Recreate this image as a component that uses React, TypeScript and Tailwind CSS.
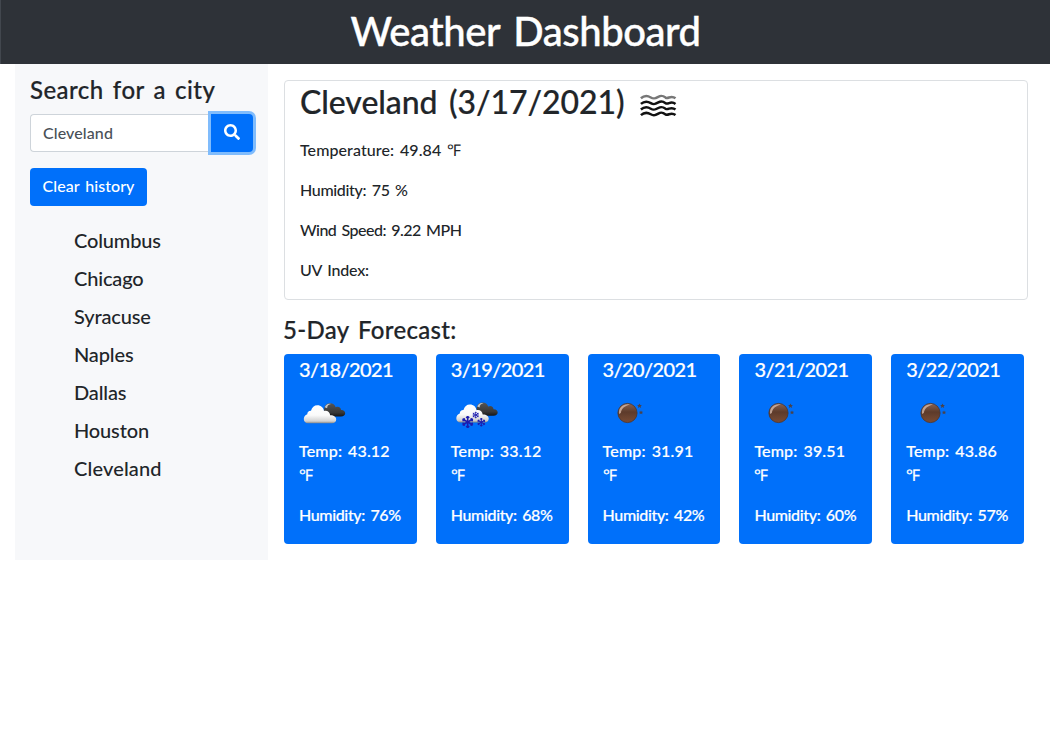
import type { ReactNode } from "react";

const cities = ["Columbus", "Chicago", "Syracuse", "Naples", "Dallas", "Houston", "Cleveland"];

type Sky = "clouds" | "snow" | "moon";

const forecast: { date: string; temp: string; humidity: number; sky: Sky }[] = [
  { date: "3/18/2021", temp: "43.12", humidity: 76, sky: "clouds" },
  { date: "3/19/2021", temp: "33.12", humidity: 68, sky: "snow" },
  { date: "3/20/2021", temp: "31.91", humidity: 42, sky: "moon" },
  { date: "3/21/2021", temp: "39.51", humidity: 60, sky: "moon" },
  { date: "3/22/2021", temp: "43.86", humidity: 57, sky: "moon" },
];

function Flake({ x, y, r }: { x: number; y: number; r: number }) {
  return (
    <g transform={`translate(${x} ${y}) scale(${r / 6})`} stroke="#1c1cae" strokeWidth="1.5" fill="none">
      {[0, 60, 120, 180, 240, 300].map((a) => (
        <path key={a} transform={`rotate(${a})`} d="M0 0V-6M-1.5 -5.2L0 -3.6L1.5 -5.2" />
      ))}
    </g>
  );
}

function SkyIcon({ sky }: { sky: Sky }) {
  return (
    <svg width="50" height="50" viewBox="0 0 50 50" className="block">
      <defs>
        <linearGradient id="white" x1="0" y1="0" x2="0" y2="1">
          <stop offset="0" stopColor="#fff" />
          <stop offset=".55" stopColor="#fafafa" />
          <stop offset=".88" stopColor="#d2d2d2" />
          <stop offset="1" stopColor="#858585" />
        </linearGradient>
        <linearGradient id="dark" x1="0" y1="0" x2="0" y2="1">
          <stop offset="0" stopColor="#555" />
          <stop offset=".7" stopColor="#383838" />
          <stop offset="1" stopColor="#171717" />
        </linearGradient>
        <linearGradient id="brown" x1="0" y1="0" x2="0" y2="1">
          <stop offset="0" stopColor="#8a6350" />
          <stop offset=".45" stopColor="#5d3b2b" />
          <stop offset="1" stopColor="#7a4c35" />
        </linearGradient>
      </defs>
      {sky === "moon" ? (
        <g transform="translate(-3.5 0)">
          <circle cx="28" cy="25" r="9.6" fill="url(#brown)" stroke="#523424" strokeWidth=".8" />
          <path d="M19.5 26C18.7 19.5 24 15.3 30.5 16.5C25.5 18 22.5 19.5 21.3 25Z" fill="#d4b8a8" opacity=".8" />
          <path d="M40 15.5l.8 1.5 1.6.1-1.2 1.1.4 1.7-1.6-.8-1.6.8.4-1.7-1.2-1.1 1.6-.1zM41.5 22.5l.7 1.2 1.5.1-1.1 1 .3 1.5-1.4-.7-1.4.7.3-1.5-1.1-1 1.5-.1z" fill="#49434b" />
        </g>
      ) : (
        <g transform={sky === "snow" ? "translate(.5 -1.5)" : "translate(0 -.7)"}>
          <path d="M25 23.5C25 19 27 16 31 16C34 16 35.8 17.5 36.7 20C39.5 18.5 42 20.5 42 22.7C44.5 22.5 46.2 24 46.2 26C46.2 28 44.5 29.2 42 29.2H29Z" fill="url(#dark)" />
          <path d="M25.7 20C27 16.8 29.5 15.8 32 16.8C29.5 17.2 28.3 18.2 28.1 21Z" fill="#c4c4c4" />
          <path d="M9 36C6.5 36 4.8 34.2 4.8 31.8C4.8 29.4 6.2 27.8 8.3 27C8.2 24.6 10 23.3 12 23.5C12.8 20 15.3 18 18.4 18C22 18 24.6 20.4 25 23.8C28 22.8 31 25 31.2 28C34.5 27.8 37.2 29.5 37.2 32.3C37.2 34.6 35.5 36 33 36Z" fill="url(#white)" />
        </g>
      )}
      {sky === "snow" && (
        <g>
          <Flake x={16.7} y={34} r={6} />
          <Flake x={24.7} y={27} r={3.3} />
          <Flake x={30.3} y={34.3} r={4.2} />
        </g>
      )}
    </svg>
  );
}

function MistIcon() {
  return (
    <svg width="50" height="36" viewBox="0 0 50 36" fill="none" strokeWidth="2.5">
      {["#777", "#111", "#111", "#111"].map((c, i) => (
        <path
          key={i}
          transform={`translate(-.7 ${i * 5.6 + 1.3})`}
          stroke={c}
          d="M8.6 10C12 7 15 7.1 18.5 9.2C22 11.2 23.5 10 26 8.5C29.5 6.7 31 7.6 33.3 9.3C36 11 38.5 6.3 43.2 10"
        />
      ))}
    </svg>
  );
}

function Reading({ children, className }: { children: ReactNode; className: string }) {
  return <p className={`mb-4 leading-6 ${className}`}>{children}</p>;
}

export default function App() {
  return (
    <div className="min-h-screen bg-white font-['Lato',sans-serif] text-base font-medium text-[#212529] [&_*]:[word-spacing:0.11em]">
      <header className="flex h-16 justify-center border-l border-[#42474e] bg-[#2e3238] pt-[7px] text-white">
        <h1 className="text-[40px] leading-12 tracking-[-0.46px] [-webkit-text-stroke:0.4px]">Weather Dashboard</h1>
      </header>
      <div className="flex pl-[15px]">
        <aside className="h-[496px] w-[253px] shrink-0 bg-[#f7f8fa] px-[15px] pt-[11px]">
          <h4 className="text-2xl leading-[29px] tracking-[0.46px] [-webkit-text-stroke:0.2px]">Search for a city</h4>
          <div className="mt-[10px] flex h-[38px] w-[223px]">
            <input
              defaultValue="Cleveland"
              className="w-[181px] rounded-l border border-r-0 border-[#ced4da] bg-white px-3 tracking-[0.1px] text-[#495057] outline-none"
            />
            <button className="flex flex-1 items-center justify-center rounded-r bg-[#0070fa] text-white shadow-[0_0_0_3px_#80bcfc]" aria-label="Search">
              <svg width="16" height="16" viewBox="0 0 512 512" fill="currentColor" className="mb-0.5">
                <path d="M505 442.7L405.3 343c-4.5-4.5-10.6-7-17-7H372c27.6-35.3 44-79.7 44-128C416 93.1 322.9 0 208 0S0 93.1 0 208s93.1 208 208 208c48.3 0 92.7-16.4 128-44v16.3c0 6.4 2.5 12.5 7 17l99.7 99.7c9.4 9.4 24.6 9.4 33.9 0l28.3-28.3c9.4-9.4 9.4-24.6.1-34zM208 336c-70.7 0-128-57.2-128-128 0-70.7 57.2-128 128-128 70.7 0 128 57.2 128 128 0 70.7-57.2 128-128 128z" />
              </svg>
            </button>
          </div>
          <button className="mt-4 h-[38px] w-[117px] rounded bg-[#0070fa] pb-0.5 tracking-[0.06px] text-white">Clear history</button>
          <ul className="mt-[15px] pl-11 text-xl leading-[38px]">
            {cities.map((c) => (
              <li key={c} className={c === "Cleveland" ? "tracking-[0.15px]" : "tracking-[-0.15px]"}>{c}</li>
            ))}
          </ul>
        </aside>
        <main className="ml-4 w-[744px] pt-4">
          <section className="h-[220px] rounded border border-[#dcdfe2] px-[15px]">
            <div className="flex h-[57px] items-start pt-[2px]">
              <h2 className="w-[333px] whitespace-nowrap text-[32px] leading-[38px] tracking-[-0.07px] [-webkit-text-stroke:0.2px]">Cleveland (3/17/2021)</h2>
              <div className="pt-1"><MistIcon /></div>
            </div>
            <Reading className="tracking-[0.08px]">Temperature: 49.84 ℉</Reading>
            <Reading className="tracking-[-0.33px]">Humidity: 75 %</Reading>
            <Reading className="tracking-[-0.52px]">Wind Speed: 9.22 MPH</Reading>
            <Reading className="tracking-[-0.2px]">UV Index:</Reading>
          </section>
          <h4 className="-ml-px mt-[15px] text-2xl leading-[29px] tracking-[0.32px] [-webkit-text-stroke:0.2px]">5-Day Forecast:</h4>
          <div className="mt-[10px] grid w-[740px] grid-cols-5 gap-[19px]">
            {forecast.map((d) => (
              <article key={d.date} className="h-[190px] rounded bg-[#0070fa] px-[15px] pt-[3px] text-white">
                <h5 className="text-xl leading-6 tracking-[-0.6px] [-webkit-text-stroke:0.2px]">{d.date}</h5>
                <div className="mt-[7px]"><SkyIcon sky={d.sky} /></div>
                <p className="mt-[1px] leading-6 tracking-[0.16px] [-webkit-text-stroke:0.2px]">Temp: {d.temp}<br />℉</p>
                <p className="mt-4 whitespace-nowrap leading-6 tracking-[-0.36px] [-webkit-text-stroke:0.2px]">Humidity: {d.humidity}%</p>
              </article>
            ))}
          </div>
        </main>
      </div>
    </div>
  );
}
